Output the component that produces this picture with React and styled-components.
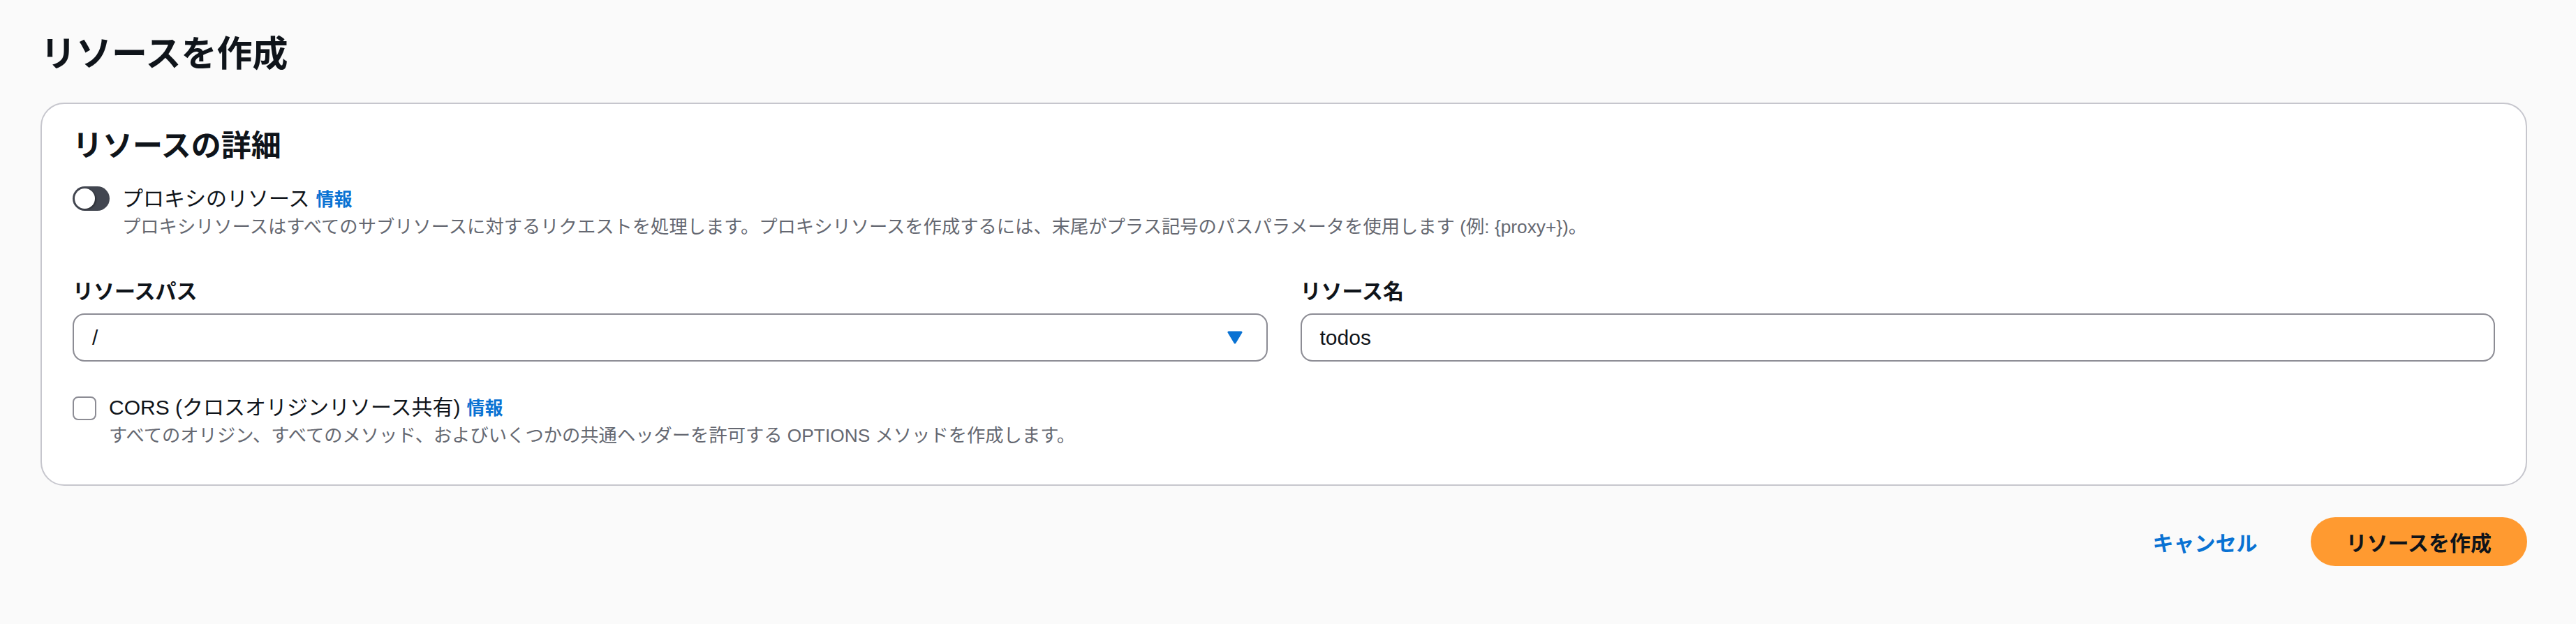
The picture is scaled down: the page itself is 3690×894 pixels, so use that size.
import React from 'react';
import styled, { createGlobalStyle } from 'styled-components';

const GlobalStyle = createGlobalStyle`
  html, body {
    margin: 0;
    padding: 0;
    background: #fafafa;
  }
  body {
    font-family: "Liberation Sans", "Noto Sans CJK JP", sans-serif;
    color: #0f141a;
  }
  * {
    box-sizing: border-box;
  }
`;

const Page = styled.div`
  width: 3690px;
  height: 894px;
  padding: 48px 70px 0 58px;
  background: #fafafa;
`;

const Title = styled.h1`
  margin: 0;
  font-size: 51px;
  line-height: 60px;
  font-weight: 700;
  color: #0f141a;
`;

const Card = styled.section`
  margin-top: 39px;
  background: #ffffff;
  border: 2px solid #c6c6cd;
  border-radius: 34px;
  padding: 36px 44px 51px 44px;
`;

const CardHeader = styled.h2`
  margin: 0 0 32px 0;
  font-size: 43px;
  line-height: 48px;
  font-weight: 700;
`;

const OptionRow = styled.div`
  display: flex;
  align-items: flex-start;
  gap: 18px;
`;

const OptionText = styled.div`
  display: flex;
  flex-direction: column;
`;

const OptionLabel = styled.div`
  font-size: 30px;
  line-height: 40px;
  color: #0f141a;
`;

const Info = styled.a`
  margin-left: 9px;
  font-size: 26px;
  font-weight: 700;
  color: #0972d3;
  text-decoration: none;
`;

const Hint = styled.div`
  font-size: 26.3px;
  line-height: 38px;
  color: #656871;
`;

const Toggle = styled.span`
  flex: none;
  position: relative;
  margin-top: 2px;
  width: 53px;
  height: 35px;
  border-radius: 18px;
  background: #424650;
`;

const Knob = styled.span`
  position: absolute;
  left: 3px;
  top: 3px;
  width: 29px;
  height: 29px;
  border-radius: 50%;
  background: #ffffff;
  box-shadow: 2px 1px 2px rgba(0, 0, 0, 0.35);
`;

const Checkbox = styled.span`
  flex: none;
  margin-top: 4px;
  width: 34px;
  height: 34px;
  border: 2px solid #8c8c94;
  border-radius: 8px;
  background: #ffffff;
`;

const FieldGrid = styled.div`
  display: grid;
  grid-template-columns: 1fr 1fr;
  column-gap: 47px;
  margin: 54px 0 46px 0;
`;

const Field = styled.div`
  display: flex;
  flex-direction: column;
  gap: 11px;
`;

const FieldLabel = styled.label`
  font-size: 30px;
  line-height: 40px;
  font-weight: 700;
`;

const InputBox = styled.div`
  height: 69px;
  display: flex;
  align-items: center;
  justify-content: space-between;
  padding: 0 34px 0 26px;
  border: 2px solid #8c8c94;
  border-radius: 17px;
  background: #ffffff;
  font-size: 30px;
  color: #0f141a;
`;

const Actions = styled.div`
  display: flex;
  justify-content: flex-end;
  align-items: center;
  gap: 76px;
  margin-top: 45px;
`;

const LinkButton = styled.button`
  border: none;
  background: none;
  padding: 0;
  font-family: inherit;
  font-size: 30px;
  font-weight: 700;
  color: #0972d3;
`;

const PrimaryButton = styled.button`
  height: 70px;
  padding: 0 51px;
  border: none;
  border-radius: 35px;
  background: #ff9a30;
  font-family: inherit;
  font-size: 30px;
  font-weight: 700;
  color: #0f141a;
`;

const Caret = () => (
  <svg width="22" height="19" viewBox="0 0 22 19">
    <path d="M2 2 L20 2 L11 17 Z" fill="#0972d3" stroke="#0972d3" strokeWidth="3" strokeLinejoin="round" />
  </svg>
);

export default function App() {
  return (
    <Page>
      <GlobalStyle />
      <Title>リソースを作成</Title>
      <Card>
        <CardHeader>リソースの詳細</CardHeader>
        <OptionRow>
          <Toggle>
            <Knob />
          </Toggle>
          <OptionText>
            <OptionLabel>
              プロキシのリソース<Info>情報</Info>
            </OptionLabel>
            <Hint>
              プロキシリソースはすべてのサブリソースに対するリクエストを処理します。プロキシリソースを作成するには、末尾がプラス記号のパスパラメータを使用します (例: {'{proxy+}'})。
            </Hint>
          </OptionText>
        </OptionRow>
        <FieldGrid>
          <Field>
            <FieldLabel>リソースパス</FieldLabel>
            <InputBox>
              <span>/</span>
              <Caret />
            </InputBox>
          </Field>
          <Field>
            <FieldLabel>リソース名</FieldLabel>
            <InputBox>todos</InputBox>
          </Field>
        </FieldGrid>
        <OptionRow>
          <Checkbox />
          <OptionText>
            <OptionLabel>
              CORS (クロスオリジンリソース共有)<Info>情報</Info>
            </OptionLabel>
            <Hint>
              すべてのオリジン、すべてのメソッド、およびいくつかの共通ヘッダーを許可する OPTIONS メソッドを作成します。
            </Hint>
          </OptionText>
        </OptionRow>
      </Card>
      <Actions>
        <LinkButton>キャンセル</LinkButton>
        <PrimaryButton>リソースを作成</PrimaryButton>
      </Actions>
    </Page>
  );
}
